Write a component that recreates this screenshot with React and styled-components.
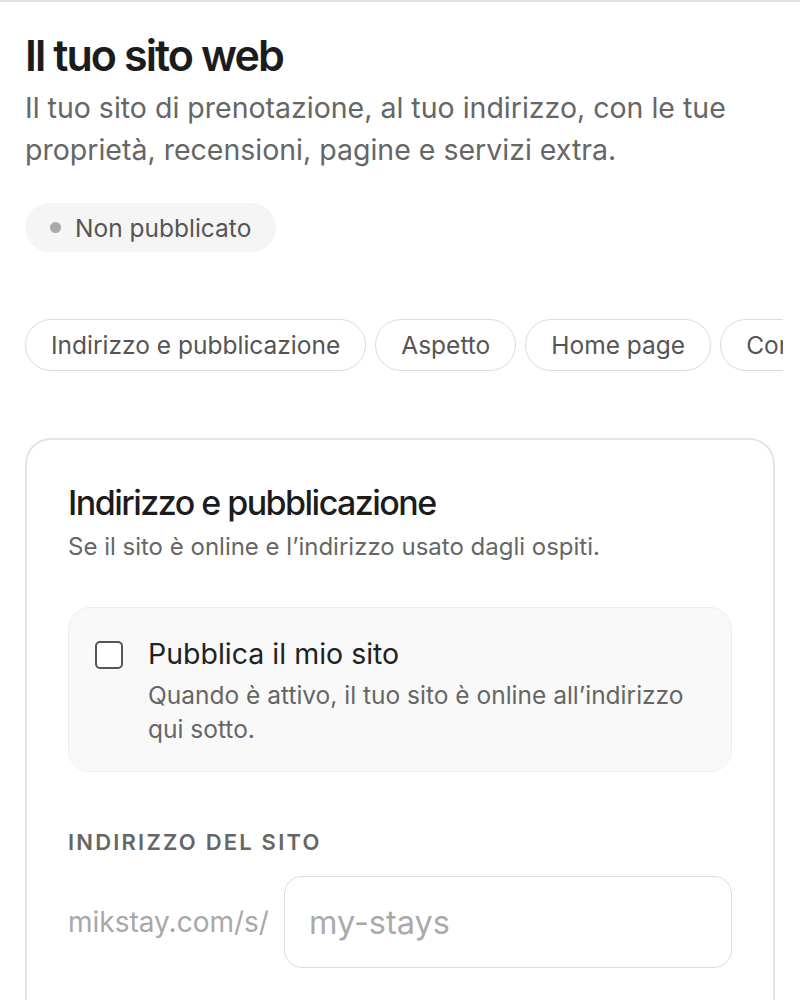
import React from "react";
import styled, { createGlobalStyle } from "styled-components";

const GlobalStyle = createGlobalStyle`
  * { box-sizing: border-box; }
  body {
    margin: 0;
    background: #fff;
    font-family: Inter, "Noto Sans", "Liberation Sans", sans-serif;
    color: #222;
  }
`;

const tabs = ["Indirizzo e pubblicazione", "Aspetto", "Home page", "Contenuti"];

const Page = styled.div`
  border-top: 2px solid #e2e2e2;
  padding: 27px 25px 0;
  overflow: hidden;
`;

const Title = styled.h1`
  margin: 0;
  font-size: 43px;
  line-height: 52px;
  font-weight: 600;
  letter-spacing: -0.045em;
  color: #1c1c1c;
`;

const Lead = styled.p`
  margin: 6px 0 0;
  font-size: 28.5px;
  line-height: 42px;
  color: #666;
`;

const Badge = styled.div`
  display: inline-flex;
  align-items: center;
  gap: 14px;
  height: 49px;
  margin-top: 32px;
  padding: 0 25px;
  border-radius: 999px;
  background: #f5f5f5;
  font-size: 24.5px;
  color: #555;
`;

const Dot = styled.span`
  width: 11px;
  height: 11px;
  border-radius: 50%;
  background: #aaa;
`;

const TabRow = styled.div`
  display: flex;
  gap: 9px;
  margin: 67px -8px 0 0;
  overflow: hidden;
`;

const Tab = styled.button`
  flex: none;
  height: 52px;
  padding: 0 25px;
  border: 1.5px solid #dcdcdc;
  border-radius: 999px;
  background: #fff;
  font-family: inherit;
  font-size: 24.5px;
  color: #555;
`;

const Card = styled.section`
  margin-top: 67px;
  border: 2px solid #e4e4e4;
  border-radius: 26px;
  padding: 42px 41px 60px;
`;

const CardTitle = styled.h2`
  margin: 0;
  font-size: 34px;
  line-height: 42px;
  font-weight: 500;
  letter-spacing: -0.045em;
  color: #1c1c1c;
`;

const CardText = styled.p`
  margin: 7px 0 0;
  font-size: 24px;
  line-height: 32px;
  color: #666;
`;

const Option = styled.div`
  display: flex;
  gap: 25px;
  margin-top: 44px;
  padding: 29px 26px 25px;
  background: #f9f9f9;
  border: 1.5px solid #eee;
  border-radius: 22px;
`;

const Check = styled.span`
  flex: none;
  width: 28px;
  height: 28px;
  margin-top: 4px;
  border: 2px solid #555;
  border-radius: 5px;
  background: #fff;
`;

const OptionTitle = styled.div`
  font-size: 28.5px;
  line-height: 34px;
  color: #222;
`;

const OptionText = styled.div`
  margin-top: 7px;
  font-size: 24.5px;
  line-height: 34px;
  color: #666;
`;

const Label = styled.div`
  margin-top: 57px;
  font-size: 22px;
  line-height: 26px;
  font-weight: 600;
  letter-spacing: 0.1em;
  color: #666;
`;

const AddressRow = styled.div`
  display: flex;
  align-items: center;
  gap: 15px;
  margin-top: 21px;
`;

const Prefix = styled.span`
  font-size: 28px;
  color: #a8a8a8;
`;

const Input = styled.input`
  flex: 1;
  min-width: 0;
  height: 92px;
  padding: 0 24px;
  border: 1.5px solid #dcdcdc;
  border-radius: 18px;
  font-family: inherit;
  font-size: 32.5px;
  color: #222;
  outline: none;
  &::placeholder { color: #aaa; }
`;

export default function App() {
  return (
    <>
      <GlobalStyle />
      <Page>
        <Title>Il tuo sito web</Title>
        <Lead>
          Il tuo sito di prenotazione, al tuo indirizzo, con le tue proprietà, recensioni, pagine e servizi extra.
        </Lead>
        <Badge>
          <Dot />
          Non pubblicato
        </Badge>
        <TabRow>
          {tabs.map((t) => (
            <Tab key={t}>{t}</Tab>
          ))}
        </TabRow>
        <Card>
          <CardTitle>Indirizzo e pubblicazione</CardTitle>
          <CardText>Se il sito è online e l’indirizzo usato dagli ospiti.</CardText>
          <Option>
            <Check />
            <div>
              <OptionTitle>Pubblica il mio sito</OptionTitle>
              <OptionText>Quando è attivo, il tuo sito è online all’indirizzo qui sotto.</OptionText>
            </div>
          </Option>
          <Label>INDIRIZZO DEL SITO</Label>
          <AddressRow>
            <Prefix>mikstay.com/s/</Prefix>
            <Input placeholder="my-stays" />
          </AddressRow>
        </Card>
      </Page>
    </>
  );
}
